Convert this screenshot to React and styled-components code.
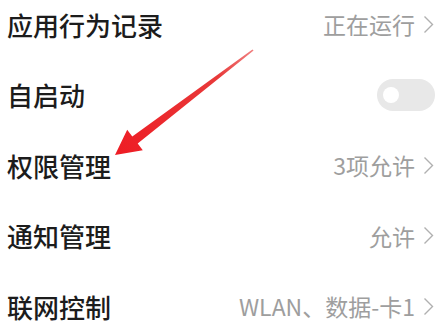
import React from 'react'
import styled, { createGlobalStyle } from 'styled-components'

const Global = createGlobalStyle`
    html, body {
        margin: 0;
        padding: 0;
        background: #fff;
        overflow: hidden;
    }
    body {
        font-family: "Noto Sans CJK SC", "Noto Sans", sans-serif;
    }
`

const Page = styled.div`
    position: relative;
    width: 445px;
    height: 333px;
    overflow: hidden;
    background: #fff;
`

const List = styled.ul`
    list-style: none;
    margin: -11px 0 0 0;
    padding: 0;
`

const Row = styled.li`
    height: 70.5px;
    display: flex;
    align-items: center;
    justify-content: space-between;
    padding: 0 ${(p) => (p.toggle ? '10px' : '11px')} 0 7px;
`

const Label = styled.span`
    font-size: 26px;
    font-weight: 500;
    color: #1c1c1c;
`

const Value = styled.span`
    display: flex;
    align-items: center;
    gap: 8px;
    font-size: 23px;
    color: #9e9e9e;
`

const Chevron = styled.svg`
    width: 11px;
    height: 19px;
    flex: none;
`

const Switch = styled.span`
    width: 58px;
    height: 32px;
    border-radius: 16px;
    background: #e8e8e8;
    display: flex;
    align-items: center;
    padding-left: 6px;
    box-sizing: border-box;
`

const Knob = styled.span`
    width: 16px;
    height: 16px;
    border-radius: 50%;
    background: #fff;
`

const Arrow = styled.svg`
    position: absolute;
    left: 0;
    top: 0;
    pointer-events: none;
`

const rows = [
    { label: '应用行为记录', value: '正在运行' },
    { label: '自启动', toggle: true },
    { label: '权限管理', value: '3项允许' },
    { label: '通知管理', value: '允许' },
    { label: '联网控制', value: 'WLAN、数据-卡1' },
]

const Arrowhead = () => (
    <Chevron viewBox="0 0 11 19">
        <path d="M1.5 1.5 L9.5 9.5 L1.5 17.5" fill="none" stroke="#b0b0b0" strokeWidth="1.4" />
    </Chevron>
)

export default function App() {
    return (
        <Page>
            <Global />
            <List>
                {rows.map((r) => (
                    <Row key={r.label} toggle={r.toggle ? 1 : 0}>
                        <Label>{r.label}</Label>
                        {r.toggle ? (
                            <Switch><Knob /></Switch>
                        ) : (
                            <Value>{r.value}<Arrowhead /></Value>
                        )}
                    </Row>
                ))}
            </List>
            <Arrow width="445" height="333" viewBox="0 0 445 333">
                <defs>
                    <linearGradient id="shaft" x1="253" y1="50" x2="115" y2="155" gradientUnits="userSpaceOnUse">
                        <stop offset="0" stopColor="#f08080" />
                        <stop offset="0.25" stopColor="#e83a3a" />
                        <stop offset="1" stopColor="#ee1c24" />
                    </linearGradient>
                </defs>
                <polygon
                    points="253.6,50.6 137.7,143.6 142.8,150.2 115,155 127.2,129.8 132.3,136.4 252.4,49.4"
                    fill="url(#shaft)"
                />
            </Arrow>
        </Page>
    )
}
